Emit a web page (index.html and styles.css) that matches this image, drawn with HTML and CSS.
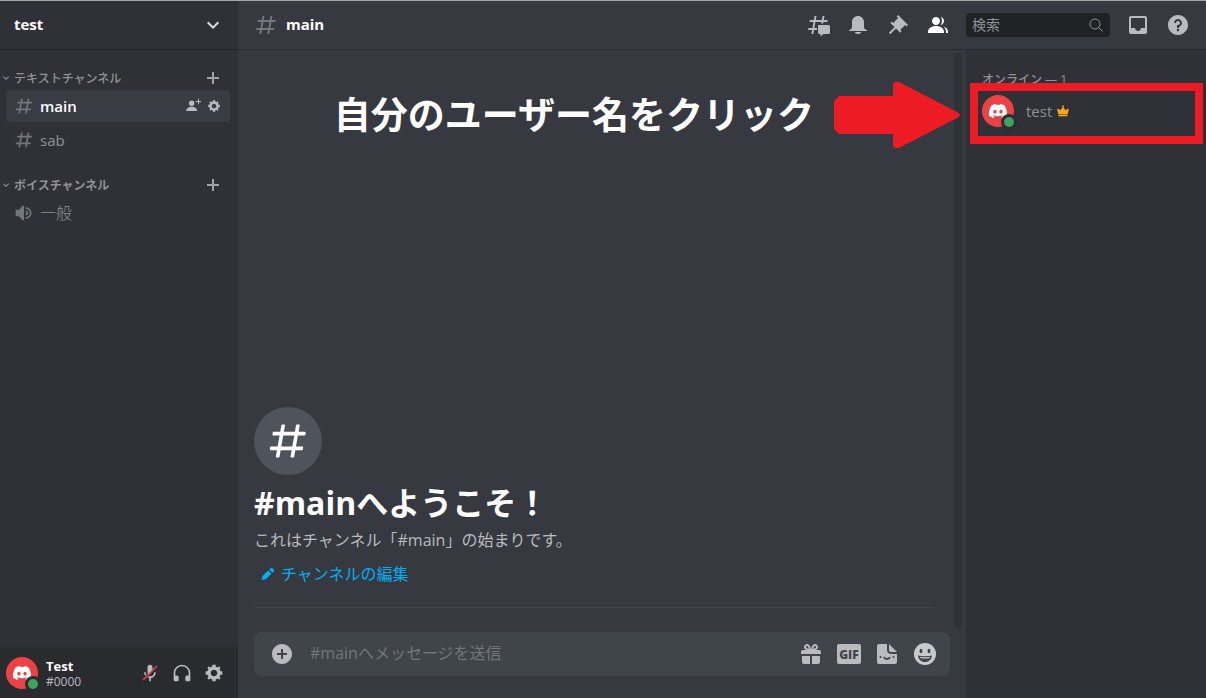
FILE: index.html
```html
<!DOCTYPE html>
<html lang="ja">
<head>
  <meta charset="utf-8">
  <title>test - main</title>
  <link rel="stylesheet" href="styles.css">
</head>
<body>
  <!-- Shared icons -->
  <svg class="sprite" aria-hidden="true">
    <symbol id="hash" viewBox="0 0 24 24"><path fill-rule="evenodd" d="M5.887 21C5.575 21 5.34 20.719 5.394 20.413L6 17H2.595C2.284 17 2.049 16.72 2.103 16.414L2.278 15.414C2.319 15.175 2.527 15 2.77 15H6.35L7.41 9H4.005C3.694 9 3.459 8.72 3.513 8.414L3.688 7.414C3.729 7.175 3.937 7 4.18 7H7.76L8.397 3.413C8.439 3.174 8.647 3 8.889 3H9.873C10.185 3 10.42 3.281 10.366 3.587L9.76 7H15.76L16.397 3.413C16.439 3.174 16.647 3 16.889 3H17.873C18.185 3 18.42 3.281 18.366 3.587L17.76 7H21.165C21.476 7 21.711 7.28 21.657 7.586L21.482 8.586C21.441 8.825 21.233 9 20.99 9H17.41L16.35 15H19.755C20.066 15 20.301 15.28 20.247 15.586L20.072 16.586C20.031 16.825 19.823 17 19.58 17H16L15.363 20.587C15.321 20.826 15.113 21 14.871 21H13.887C13.576 21 13.34 20.719 13.394 20.413L14 17H8L7.363 20.587C7.321 20.826 7.113 21 6.871 21ZM9.41 9L8.35 15H14.35L15.41 9Z"/></symbol>
    <symbol id="gear" viewBox="0 0 24 24"><path fill-rule="evenodd" d="M19.738 10H22V14H19.739C19.498 14.931 19.1 15.798 18.565 16.564L20 18L18 20L16.565 18.564C15.797 19.099 14.932 19.498 14 19.738V22H10V19.738C9.069 19.498 8.203 19.099 7.436 18.564L6 20L4 18L5.436 16.564C4.901 15.799 4.502 14.932 4.262 14H2V10H4.262C4.502 9.068 4.9 8.202 5.436 7.436L4 6L6 4L7.436 5.436C8.202 4.9 9.068 4.502 10 4.262V2H14V4.261C14.932 4.502 15.797 4.9 16.565 5.435L18 3.999L20 5.999L18.564 7.436C19.099 8.202 19.498 9.069 19.738 10ZM12 16C14.209 16 16 14.209 16 12C16 9.791 14.209 8 12 8C9.791 8 8 9.791 8 12C8 14.209 9.791 16 12 16Z"/></symbol>
    <symbol id="plus" viewBox="0 0 18 18"><path d="M15 10H10V15H8V10H3V8H8V3H10V8H15Z"/></symbol>
    <symbol id="chevron" viewBox="0 0 24 24"><path d="M16.59 8.59L12 13.17L7.41 8.59L6 10L12 16L18 10Z"/></symbol>
    <symbol id="logo" viewBox="0 0 28 20"><path fill-rule="evenodd" d="M23.021 1.677C21.311 0.88 19.508 0.319 17.658 0C17.406 0.462 17.175 0.935 16.971 1.418C15.003 1.121 12.997 1.121 11.028 1.418C10.819 0.935 10.589 0.462 10.337 0.005C8.481 0.324 6.678 0.885 4.967 1.682C1.567 6.779 0.65 11.754 1.111 16.652C3.101 18.142 5.326 19.274 7.692 20C8.223 19.274 8.695 18.499 9.098 17.691C8.33 17.4 7.585 17.042 6.877 16.614C7.065 16.476 7.247 16.339 7.424 16.185C11.591 18.175 16.408 18.175 20.576 16.185C20.753 16.333 20.935 16.476 21.117 16.614C20.41 17.037 19.664 17.4 18.897 17.691C19.305 18.499 19.772 19.269 20.302 19.995C22.668 19.269 24.893 18.136 26.883 16.647C27.43 10.973 25.967 6.047 23.021 1.677ZM9.68 13.638C8.398 13.638 7.341 12.445 7.341 10.994C7.341 9.543 8.372 8.35 9.68 8.35C10.989 8.35 12.04 9.543 12.019 10.994C12.019 12.445 10.983 13.638 9.68 13.638ZM18.316 13.638C17.033 13.638 15.977 12.445 15.977 10.994C15.977 9.543 17.012 8.35 18.316 8.35C19.618 8.35 20.675 9.543 20.654 10.994C20.654 12.445 19.618 13.638 18.316 13.638Z"/></symbol>
  </svg>

  <div class="app">
    <nav class="sidebar">
      <button class="server-header" type="button">
        <span>test</span>
        <svg class="icon-24"><use href="#chevron"/></svg>
      </button>

      <div class="channels">
        <section class="category">
          <div class="category-head">
            <svg class="icon-12"><use href="#chevron"/></svg>
            <h2>テキストチャンネル</h2>
            <button type="button" aria-label="チャンネルを作成"><svg class="icon-18"><use href="#plus"/></svg></button>
          </div>
          <div class="channel selected">
            <a href="#main"><svg class="icon-20"><use href="#hash"/></svg>main</a>
            <button type="button" aria-label="招待を作成">
              <svg class="icon-16" viewBox="0 0 16 16"><path d="M14 3V0.7H13V3H10.7V4H13V6.300H14V4H16.300V3ZM6.700 8A2.700 2.700 0 1 0 6.700 2.600A2.700 2.700 0 0 0 6.700 8ZM6.700 8.700C3.500 8.700 1.200 10.400 1.200 13H12.200C12.200 10.400 9.900 8.700 6.700 8.700Z"/></svg>
            </button>
            <button type="button" aria-label="チャンネルの編集"><svg class="icon-14"><use href="#gear"/></svg></button>
          </div>
          <div class="channel">
            <a href="#sab"><svg class="icon-20"><use href="#hash"/></svg>sab</a>
          </div>
        </section>

        <section class="category">
          <div class="category-head">
            <svg class="icon-12"><use href="#chevron"/></svg>
            <h2 class="bold">ボイスチャンネル</h2>
            <button type="button" aria-label="チャンネルを作成"><svg class="icon-18"><use href="#plus"/></svg></button>
          </div>
          <div class="channel voice">
            <a href="#voice">
              <svg class="icon-20" viewBox="0 0 24 24"><path d="M11.383 3.079C11.009 2.925 10.579 3.01 10.293 3.296L6 8.002H3C2.45 8.002 2 8.453 2 9.002V15.002C2 15.552 2.45 16.002 3 16.002H6L10.293 20.71C10.579 20.996 11.009 21.082 11.383 20.927C11.757 20.772 12 20.407 12 20.002V4.002C12 3.599 11.757 3.232 11.383 3.079ZM14 5.002V7.002C16.757 7.002 19 9.246 19 12.002C19 14.759 16.757 17.002 14 17.002V19.002C17.86 19.002 21 15.863 21 12.002C21 8.143 17.86 5.002 14 5.002ZM14 9.002C15.654 9.002 17 10.349 17 12.002C17 13.657 15.654 15.002 14 15.002V13.002C14.551 13.002 15 12.553 15 12.002C15 11.451 14.551 11.002 14 11.002Z"/></svg>
              一般
            </a>
          </div>
        </section>
      </div>

      <div class="user-panel">
        <span class="avatar"><svg><use href="#logo"/></svg></span>
        <div class="user-name">
          <strong>Test</strong>
          <span>#0000</span>
        </div>
        <button type="button" aria-label="ミュート">
          <svg class="icon-20" viewBox="0 0 24 24">
            <path d="M12 2C10.340 2 9 3.340 9 5V11C9 12.400 9.950 13.550 11.240 13.900L15 9.500V5C15 3.340 13.660 2 12 2ZM5 11C5 12.600 5.500 14 6.300 15.200L7.800 13.700C7.300 12.900 7 12 7 11ZM17 11C17 13.760 14.760 16 12 16C11.500 16 11 15.900 10.600 15.800L9 17.400C9.600 17.700 10.300 17.900 11 18V22H13V18C16.500 17.500 19 14.500 19 11Z"/>
            <path class="slash" d="M21 4.300L19.700 3L3 19.700L4.300 21Z"/>
          </svg>
        </button>
        <button type="button" aria-label="スピーカーミュート">
          <svg class="icon-20" viewBox="0 0 24 24"><path d="M12 2.003C6.486 2.003 2 6.488 2 12.003V20.003C2 21.107 2.895 22.003 4 22.003H6C7.104 22.003 8 21.107 8 20.003V17.003C8 15.899 7.104 15.003 6 15.003H4V12.003C4 7.591 7.589 4.003 12 4.003C16.411 4.003 20 7.591 20 12.003V15.003H18C16.896 15.003 16 15.899 16 17.003V20.003C16 21.107 16.896 22.003 18 22.003H20C21.104 22.003 22 21.107 22 20.003V12.003C22 6.488 17.514 2.003 12 2.003Z"/></svg>
        </button>
        <button type="button" aria-label="ユーザー設定"><svg class="icon-20"><use href="#gear"/></svg></button>
      </div>
    </nav>

    <div class="content">
      <header class="topbar">
        <svg class="icon-24 title-hash"><use href="#hash"/></svg>
        <h1>main</h1>
        <div class="toolbar">
          <button type="button" aria-label="スレッド">
            <svg class="icon-24" viewBox="0 0 24 24"><path d="M5.400 21L6.100 17H2.100L2.450 15H6.450L7.500 9H3.500L3.850 7H7.850L8.550 3H10.500L9.800 7H15.800L16.500 3H18.450L17.750 7H21.700L21.350 9H17.400L17.200 10.500H15.200L15.450 9H9.450L8.400 15H11V17H8.050L7.350 21Z"/><path d="M13 12H22.500C23.300 12 24 12.700 24 13.500V19.500C24 20.300 23.300 21 22.500 21H17.500L14.500 23.500V21H13.500C12.700 21 12 20.300 12 19.500V13C12 12.500 12.500 12 13 12Z"/></svg>
          </button>
          <button type="button" aria-label="通知設定">
            <svg class="icon-24" viewBox="0 0 24 24"><path d="M18 9V14C18 15.657 19.344 17 21 17V18H3V17C4.656 17 6 15.657 6 14V9C6 5.686 8.686 3 12 3C15.314 3 18 5.686 18 9ZM12 21C10.524 21 9.248 20.19 8.555 19H15.445C14.752 20.19 13.476 21 12 21Z"/></svg>
          </button>
          <button type="button" aria-label="ピン留め">
            <svg class="icon-24" viewBox="0 0 24 24"><path d="M22 12L12.101 2.101L10.686 3.514L12.101 4.929L7.151 9.878L5.736 8.465L4.322 9.88L8.565 14.122L2.908 19.778L4.322 21.192L9.979 15.536L14.222 19.778L15.636 18.364L14.222 16.95L19.172 12L20.586 13.414Z"/></svg>
          </button>
          <button class="active" type="button" aria-label="メンバーリスト">
            <svg class="icon-24" viewBox="0 0 24 24"><path d="M14 8.006C14 10.211 12.206 12.006 10 12.006C7.795 12.006 6 10.211 6 8.006C6 5.801 7.794 4.006 10 4.006C12.206 4.006 14 5.801 14 8.006ZM2 19.006C2 15.473 5.29 13.006 10 13.006C14.711 13.006 18 15.473 18 19.006V20.006H2ZM20 20.006H22V19.006C22 16.443 20.27 14.442 17.521 13.535C19.062 14.913 20 16.806 20 19.006ZM14.883 11.908C16.666 11.504 18 9.908 18 8.006C18 5.969 16.469 4.282 14.497 4.037C15.432 5.095 16 6.485 16 8.006C16 9.449 15.489 10.774 14.638 11.81Z"/></svg>
          </button>
          <div class="search">
            <input type="text" placeholder="検索" aria-label="検索">
            <svg class="icon-16" viewBox="0 0 16 16"><circle cx="7" cy="7" r="5"/><path d="M10.700 10.700L14.500 14.500"/></svg>
          </div>
          <button type="button" aria-label="受信ボックス">
            <svg class="icon-24" viewBox="0 0 24 24"><path fill-rule="evenodd" d="M19 3H4.99C3.88 3 3.01 3.89 3.01 5L3 19C3 20.1 3.88 21 4.99 21H19C20.1 21 21 20.1 21 19V5C21 3.89 20.1 3 19 3ZM19 15H15C15 16.66 13.65 18 12 18C10.35 18 9 16.66 9 15H4.99V5H19Z"/></svg>
          </button>
          <button type="button" aria-label="ヘルプ">
            <svg class="icon-24" viewBox="0 0 24 24"><path fill-rule="evenodd" d="M12 2C6.486 2 2 6.487 2 12C2 17.515 6.486 22 12 22C17.514 22 22 17.515 22 12C22 6.487 17.514 2 12 2ZM12 18.25C11.31 18.25 10.75 17.691 10.75 17C10.75 16.31 11.31 15.75 12 15.75C12.69 15.75 13.25 16.31 13.25 17C13.25 17.691 12.69 18.25 12 18.25ZM13 13.875V15H11V12H12C13.104 12 14 11.103 14 10C14 8.896 13.104 8 12 8C10.896 8 10 8.896 10 10H8C8 7.795 9.795 6 12 6C14.205 6 16 7.795 16 10C16 11.861 14.723 13.429 13 13.875Z"/></svg>
          </button>
        </div>
      </header>

      <div class="columns">
        <main class="chat">
          <div class="messages">
            <div class="welcome">
              <span class="welcome-icon"><svg><use href="#hash"/></svg></span>
              <h2>#mainへようこそ！</h2>
              <p>これはチャンネル「#main」の始まりです。</p>
              <a href="#edit">
                <svg class="icon-16" viewBox="0 0 16 16"><path d="M1.500 14L2.500 10L8.200 4.500L11.500 7.800L5.700 13.200ZM9.200 3.600L10.600 2.200C11.100 1.700 11.900 1.700 12.400 2.200L13.800 3.600C14.300 4.100 14.300 4.900 13.800 5.400L12.400 6.800Z"/></svg>
                チャンネルの編集
              </a>
            </div>
            <div class="scrollbar"></div>
          </div>

          <form class="composer">
            <button type="button" aria-label="ファイルを添付">
              <svg class="icon-24" viewBox="0 0 24 24"><path fill-rule="evenodd" d="M12 2C6.486 2 2 6.487 2 12C2 17.515 6.486 22 12 22C17.514 22 22 17.515 22 12C22 6.487 17.514 2 12 2ZM17 13H13V17H11V13H7V11H11V7H13V11H17Z"/></svg>
            </button>
            <input type="text" placeholder="#mainへメッセージを送信" aria-label="メッセージ">
            <div class="composer-tools">
              <button type="button" aria-label="ギフト">
                <svg class="icon-24" viewBox="0 0 24 24"><path fill-rule="evenodd" d="M16.886 7.999H20C21.104 7.999 22 8.896 22 9.999V11.999H2V9.999C2 8.896 2.897 7.999 4 7.999H7.114C6.663 7.764 6.236 7.477 5.879 7.121C4.709 5.951 4.709 4.048 5.879 2.879C7.012 1.746 8.986 1.746 10.121 2.877C11.758 4.514 11.979 7.595 12 7.999C12.022 7.596 12.242 4.515 13.879 2.878C15.014 1.745 16.986 1.746 18.121 2.877C19.29 4.049 19.29 5.952 18.121 7.121C17.764 7.477 17.337 7.764 16.886 7.999ZM7.293 5.707C6.903 5.316 6.903 4.682 7.293 4.292C7.481 4.103 7.732 4 8 4C8.268 4 8.519 4.103 8.707 4.292C9.297 4.882 9.641 5.94 9.825 6.822C8.945 6.639 7.879 6.293 7.293 5.707ZM14.174 6.824C14.359 5.941 14.702 4.883 15.293 4.293C15.481 4.103 15.732 4 16 4C16.268 4 16.519 4.103 16.706 4.291C17.096 4.682 17.097 5.316 16.707 5.707C16.116 6.298 15.057 6.642 14.174 6.824ZM3 13.999V19.999C3 21.102 3.897 21.999 5 21.999H11V13.999ZM13 13.999V21.999H19C20.104 21.999 21 21.102 21 19.999V13.999Z"/></svg>
              </button>
              <button class="gif" type="button">GIF</button>
              <button type="button" aria-label="スタンプ">
                <svg class="icon-24 sticker" viewBox="0 0 24 24"><path d="M4 2H12V8C12 10.200 13.800 12 16 12H22V20C22 21.100 21.100 22 20 22H4C2.900 22 2 21.100 2 20V4C2 2.900 2.900 2 4 2ZM14 2L22 10H16C14.900 10 14 9.100 14 8Z"/><g class="face"><circle cx="5.500" cy="15" r="1"/><circle cx="18.500" cy="15" r="1"/><path d="M9 15C10 17.500 14 17.500 15 15"/></g></svg>
              </button>
              <button type="button" aria-label="絵文字">
                <svg class="icon-24 emoji" viewBox="0 0 24 24"><circle cx="12" cy="12" r="11"/><g class="face"><ellipse cx="8" cy="9" rx="1.500" ry="2.300"/><ellipse cx="16" cy="9" rx="1.500" ry="2.300"/><path d="M5 13.500C9.500 14.600 14.500 14.600 19 13.500C18.700 17.500 15.800 20 12 20C8.200 20 5.300 17.500 5 13.500Z"/></g><path d="M6.800 14.800C10 15.500 14 15.500 17.200 14.800C16.700 16.300 15.900 16.600 12 16.600C8.100 16.600 7.300 16.300 6.800 14.800Z"/></svg>
              </button>
            </div>
          </form>

          <!-- Instruction drawn over the chat -->
          <div class="callout">
            <p>自分のユーザー名をクリック</p>
            <svg viewBox="0 0 126 66" aria-hidden="true"><path d="M5 14H59V3Q59 0 62 0H65L123 30Q129 33 123 36L65 66H62Q59 66 59 63V52H5L0 47V19Z"/></svg>
          </div>
        </main>

        <aside class="members">
          <h2>オンライン — 1</h2>
          <a class="member" href="#user">
            <span class="avatar"><svg><use href="#logo"/></svg></span>
            <span>test</span>
            <svg class="crown" viewBox="0 0 16 16"><path d="M13.657 5.429C13.888 5.290 14.181 5.304 14.397 5.465C14.613 5.626 14.712 5.901 14.647 6.162L13.314 11.495C13.239 11.793 12.973 12.001 12.667 12.001H3.333C3.027 12.001 2.761 11.792 2.686 11.495L1.353 6.162C1.288 5.901 1.387 5.626 1.603 5.465C1.820 5.305 2.112 5.291 2.343 5.429L5.132 7.102L7.446 3.631L7.545 3.545L6.903 2.903C6.773 2.773 6.773 2.561 6.903 2.431L7.765 1.569C7.894 1.440 8.107 1.440 8.236 1.569L9.098 2.431C9.227 2.561 9.227 2.773 9.098 2.903L8.456 3.545L8.555 3.631L10.869 7.102ZM2.667 12.667H13.333V14H2.667Z"/></svg>
          </a>
        </aside>
      </div>
    </div>
  </div>
</body>
</html>
```
FILE: styles.css
```css
*,
*::after {
  box-sizing: border-box;
}

body {
  margin: 0;
  background: #36393f;
  color: #8e9297;
  font-family: "Open Sans", "Noto Sans CJK JP", sans-serif;
  font-size: 16px;
}

h1,
h2,
p {
  margin: 0;
}

a {
  color: inherit;
  text-decoration: none;
}

button {
  display: flex;
  align-items: center;
  justify-content: center;
  padding: 0;
  border: none;
  background: none;
  color: inherit;
  font: inherit;
  cursor: pointer;
}

input {
  flex: 1;
  min-width: 0;
  padding: 0 0 2px;
  border: none;
  outline: none;
  background: none;
  color: #dcddde;
  font: inherit;
}

/* Icons */
svg {
  flex: none;
  fill: currentColor;
}

.sprite {
  position: absolute;
  width: 0;
  height: 0;
}

.icon-12 { width: 12px; height: 12px; }
.icon-14 { width: 14px; height: 14px; }
.icon-16 { width: 16px; height: 16px; }
.icon-18 { width: 18px; height: 18px; }
.icon-20 { width: 20px; height: 20px; }
.icon-24 { width: 24px; height: 24px; }

.app {
  display: flex;
  height: 100vh;
  border-top: 1px solid #a3a6a5;
}

/* Sidebar */
.sidebar {
  display: flex;
  flex-direction: column;
  width: 238px;
  background: #2f3136;
}

.server-header {
  justify-content: space-between;
  height: 49px;
  padding: 0 13px 0 14px;
  border-bottom: 1px solid #232529;
  color: #fff;
  font-size: 15px;
  font-weight: 700;
}

.server-header span {
  padding-bottom: 2px;
}

.server-header svg {
  color: #dcddde;
}

.channels {
  flex: 1;
  padding-top: 15px;
}

.category {
  margin-bottom: 16px;
}

.category-head {
  display: flex;
  align-items: center;
  height: 25px;
  padding-right: 16px;
}

.category-head h2 {
  flex: 1;
  margin-left: 2px;
  font-size: 12px;
  font-weight: 500;
}

.category-head .bold {
  font-weight: 700;
}

.category-head button {
  color: #a0a3a8;
}

.channel {
  display: flex;
  align-items: center;
  gap: 6px;
  height: 32px;
  margin: 0 8px 2px 6px;
  padding: 0 9px 0 8px;
  border-radius: 4px;
  color: #b9bbbe;
}

.channel a {
  display: flex;
  flex: 1;
  align-items: center;
  gap: 6px;
  color: #8e9297;
  font-size: 15px;
  line-height: 20px;
}

.channel a svg {
  color: #72767d;
}

.channel.selected {
  background: #393c43;
}

.channel.selected a {
  color: #fff;
  font-weight: 600;
}

.channel.voice a {
  font-size: 16px;
  font-weight: 300;
}

/* User panel */
.user-panel {
  display: flex;
  align-items: center;
  height: 51px;
  padding: 0 8px 0 6px;
  background: #292b2f;
  color: #b9bbbe;
}

.user-name {
  display: flex;
  flex: 1;
  flex-direction: column;
  margin-left: 8px;
  padding-top: 3px;
  font-size: 12px;
  line-height: 15px;
}

.user-name strong {
  color: #fff;
  font-size: 13px;
}

.user-panel button {
  width: 32px;
  height: 32px;
}

.slash {
  fill: #ed4245;
}

.avatar {
  position: relative;
  display: flex;
  align-items: center;
  justify-content: center;
  width: 32px;
  height: 32px;
  border-radius: 50%;
  background: #ed4245;
  color: #fff;
}

.avatar svg {
  width: 20px;
  height: 14px;
}

/* Online dot */
.avatar::after {
  content: "";
  position: absolute;
  right: -3px;
  bottom: -3px;
  width: 16px;
  height: 16px;
  border: 3px solid #2b2d31;
  border-radius: 50%;
  background: #3ba55d;
}

/* Top bar */
.content {
  display: flex;
  flex: 1;
  flex-direction: column;
  min-width: 0;
}

.topbar {
  display: flex;
  align-items: center;
  height: 49px;
  padding: 0 16px;
  border-bottom: 1px solid #292b2f;
}

.title-hash {
  color: #72767d;
}

.topbar h1 {
  flex: 1;
  margin-left: 8px;
  padding-bottom: 2px;
  color: #fff;
  font-size: 15px;
  font-weight: 700;
}

.toolbar {
  display: flex;
  align-items: center;
  gap: 16px;
  color: #b9bbbe;
}

.toolbar .active {
  color: #fff;
}

.search {
  display: flex;
  align-items: center;
  width: 144px;
  height: 24px;
  padding: 0 6px;
  border-radius: 4px;
  background: #202225;
  font-size: 14px;
}

.search svg {
  fill: none;
  stroke: #8e9297;
  stroke-width: 1;
}

.search input::placeholder {
  color: #8e9297;
}

/* Chat */
.columns {
  display: flex;
  flex: 1;
  min-height: 0;
}

.chat {
  position: relative;
  display: flex;
  flex: 1;
  flex-direction: column;
  min-width: 0;
}

.messages {
  display: flex;
  flex: 1;
  padding: 3px 4px 4px 16px;
}

.scrollbar {
  width: 8px;
  border-radius: 4px;
  background: #2e3338;
}

.welcome {
  display: flex;
  flex: 1;
  flex-direction: column;
  align-items: flex-start;
  justify-content: flex-end;
  margin-right: 20px;
  margin-bottom: 20px;
  padding-bottom: 21px;
  border-bottom: 1px solid #42454a;
}

.welcome-icon {
  display: flex;
  align-items: center;
  justify-content: center;
  width: 68px;
  height: 68px;
  border-radius: 50%;
  background: #4f545c;
  color: #fff;
}

.welcome-icon svg {
  width: 44px;
  height: 44px;
}

.welcome h2 {
  margin-top: 8px;
  color: #fff;
  font-size: 32px;
  line-height: 40px;
}

.welcome p {
  margin-top: 5px;
  color: #b9bbbe;
  line-height: 24px;
}

.welcome a {
  display: flex;
  align-items: center;
  gap: 5px;
  margin-top: 10px;
  padding: 0 6px;
  color: #00aff4;
  line-height: 24px;
}

.composer {
  display: flex;
  align-items: center;
  height: 44px;
  margin: 0 16px 22px;
  padding: 0 13px 0 16px;
  border-radius: 8px;
  background: #40444b;
  color: #b9bbbe;
}

.composer input {
  margin-left: 16px;
}

.composer input::placeholder {
  color: #72767d;
}

.composer-tools {
  display: flex;
  align-items: center;
  gap: 14px;
}

.gif {
  width: 24px;
  height: 20px;
  border-radius: 2px;
  background: #b9bbbe;
  color: #40444b;
  font-size: 12px;
  font-weight: 800;
}

.face {
  fill: #40444b;
}

.sticker .face path {
  fill: none;
  stroke: #40444b;
  stroke-width: 2;
}

.emoji {
  color: #c9cacc;
}

/* Callout */
.callout {
  position: absolute;
  top: 32px;
  right: 6px;
  z-index: 1;
  display: flex;
  align-items: center;
  gap: 20px;
  color: #fff;
  font-size: 37px;
  font-weight: 700;
  line-height: 66px;
  white-space: nowrap;
}

.callout svg {
  width: 126px;
  height: 66px;
  fill: #ed1c24;
}

/* Member list */
.members {
  width: 240px;
  padding: 20px 8px;
  background: #2f3136;
}

.members h2 {
  padding-left: 8px;
  font-size: 12px;
  font-weight: 500;
  line-height: 19px;
}

.member {
  position: relative;
  display: flex;
  align-items: center;
  height: 44px;
  padding: 0 8px;
  font-size: 15px;
}

.member .avatar {
  margin-right: 12px;
}

.crown {
  width: 14px;
  height: 14px;
  margin-left: 4px;
  color: #faa61a;
}

/* Red frame around the member */
.member::after {
  content: "";
  position: absolute;
  inset: -6px -5px -11px -4px;
  border: 8px solid #ed1c24;
}
```
